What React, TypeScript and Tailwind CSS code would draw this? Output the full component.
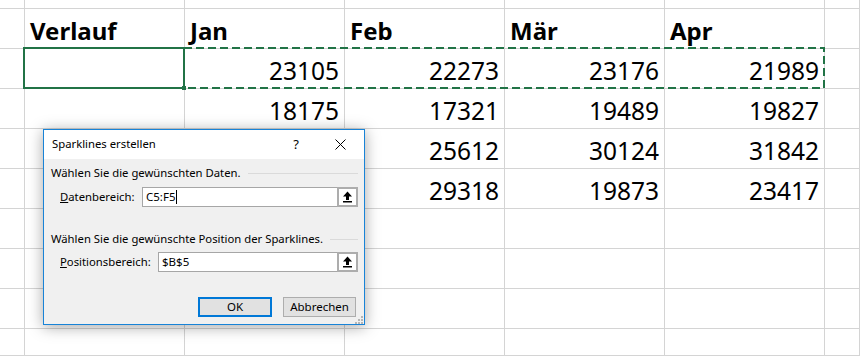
import React from 'react';

const headers = ['Verlauf', 'Jan', 'Feb', 'Mär', 'Apr'];

const rows: string[][] = [
  ['', '23105', '22273', '23176', '21989'],
  ['', '18175', '17321', '19489', '19827'],
  ['', '', '25612', '30124', '31842'],
  ['', '', '29318', '19873', '23417'],
  ['', '', '', '', ''],
  ['', '', '', '', ''],
  ['', '', '', '', ''],
];

const UpArrow: React.FC = () => (
  <svg width="11" height="12" viewBox="0 0 11 12">
    <path d="M5.5 0.5 L10 5.5 H7 V9 H4 V5.5 H1 Z" fill="#000" />
    <rect x="1" y="10" width="9" height="1.5" fill="#000" />
  </svg>
);

const RangeInput: React.FC<{ value: string; caret?: boolean; className: string }> = ({
  value,
  caret,
  className,
}) => (
  <div className={`flex h-[20px] border border-[#a6a6a6] bg-white ${className}`}>
    <div className="flex flex-1 items-center pl-[3px] text-[11.5px]">
      {value}
      {caret && <span className="ml-px inline-block h-[14px] w-px bg-black" />}
    </div>
    <div className="-my-px -mr-px flex w-[21px] items-center justify-center border-2 border-[#adadad] bg-white">
      <UpArrow />
    </div>
  </div>
);

const Dialog: React.FC = () => (
  <div
    className="absolute left-[43px] top-[129px] flex h-[196px] w-[322px] flex-col border border-[#1883d7] bg-[#f0f0f0] text-black shadow-[0_2px_14px_rgba(0,0,0,0.35)]"
    style={{ fontFamily: '"Noto Sans", sans-serif' }}
  >
    {/* title bar */}
    <div className="flex h-[29px] items-center bg-white pl-[8px] text-[11.3px]">
      <span className="flex-1">Sparklines erstellen</span>
      <span className="mr-[36px] text-[13px]">?</span>
      <svg width="11" height="11" viewBox="0 0 11 11" className="mr-[18px]">
        <path d="M0.5 0.5 L10.5 10.5 M10.5 0.5 L0.5 10.5" stroke="#000" strokeWidth="1" />
      </svg>
    </div>

    <div className="flex flex-1 flex-col pl-[7px] pr-[6px] pt-[6px] text-[11.3px]">
      <div className="flex h-[16px] items-center">
        <span>Wählen Sie die gewünschten Daten.</span>
        <div className="ml-[7px] h-px flex-1 bg-[#dadada]" />
      </div>
      <div className="mt-[6px] flex items-center">
        <span className="ml-[9px] w-[82px]">
          <span className="underline">D</span>atenbereich:
        </span>
        <RangeInput value="C5:F5" caret className="flex-1" />
      </div>

      <div className="mt-[24px] flex h-[16px] items-center">
        <span>Wählen Sie die gewünschte Position der Sparklines.</span>
        <div className="ml-[7px] h-px flex-1 bg-[#dadada]" />
      </div>
      <div className="mt-[5px] flex items-center">
        <span className="ml-[9px] w-[98px]">
          <span className="underline">P</span>ositionsbereich:
        </span>
        <RangeInput value="$B$5" className="flex-1" />
      </div>

      <div className="relative mt-[25px] flex justify-end gap-[11px] pr-[2px]">
        <button className="h-[20px] w-[74px] border-2 border-[#0078d7] bg-[#e1e1e1] text-[11.5px] leading-none">
          OK
        </button>
        <button className="h-[20px] w-[73px] border border-[#adadad] bg-[#e1e1e1] text-[11.5px] leading-none">
          Abbrechen
        </button>
        <svg width="8" height="8" viewBox="0 0 8 8" className="absolute -right-[5px] top-[19px]">
          <rect x="6" y="0" width="2" height="2" fill="#b5b5b5" />
          <rect x="3" y="3" width="2" height="2" fill="#b5b5b5" />
          <rect x="6" y="3" width="2" height="2" fill="#b5b5b5" />
          <rect x="0" y="6" width="2" height="2" fill="#b5b5b5" />
          <rect x="3" y="6" width="2" height="2" fill="#b5b5b5" />
          <rect x="6" y="6" width="2" height="2" fill="#b5b5b5" />
        </svg>
      </div>
    </div>
  </div>
);

const Cell: React.FC<{ children?: React.ReactNode; className?: string }> = ({ children, className = '' }) => (
  <div className={`flex items-end border-b border-r border-[#d4d4d4] pb-[5px] ${className}`}>{children}</div>
);

export default function App() {
  return (
    <div
      className="relative h-[356px] w-[860px] overflow-hidden bg-white text-black"
      style={{ fontFamily: '"Noto Sans", sans-serif' }}
    >
      <div className="grid h-full grid-cols-[25px_repeat(5,160px)_1fr] grid-rows-[9px_repeat(8,40px)_1fr]">
        {/* top partial row */}
        {Array.from({ length: 7 }).map((_, i) => (
          <Cell key={`t${i}`} className="pb-0" />
        ))}
        {/* header row */}
        <Cell />
        {headers.map((h) => (
          <Cell key={h} className="pl-[5px] text-[24px] font-bold leading-none">
            {h}
          </Cell>
        ))}
        <Cell />
        {rows.map((r, ri) => (
          <React.Fragment key={ri}>
            <Cell />
            {r.map((v, ci) => (
              <Cell key={ci} className="justify-end pr-[5px] text-[24.5px] leading-none">
                {v}
              </Cell>
            ))}
            <Cell />
          </React.Fragment>
        ))}
        {Array.from({ length: 7 }).map((_, i) => (
          <Cell key={`b${i}`} />
        ))}
      </div>

      {/* selection: solid B5 + copy marquee C5:F5 */}
      <svg className="pointer-events-none absolute left-0 top-0" width="860" height="100">
        <rect x="24" y="48" width="160" height="40" fill="none" stroke="#217346" strokeWidth="2" />
        <rect
          x="184"
          y="48"
          width="640"
          height="40"
          fill="none"
          stroke="#217346"
          strokeWidth="2"
          strokeDasharray="8 4"
        />
        <rect x="182" y="86" width="4" height="4" fill="#217346" />
      </svg>

      <Dialog />
    </div>
  );
}
